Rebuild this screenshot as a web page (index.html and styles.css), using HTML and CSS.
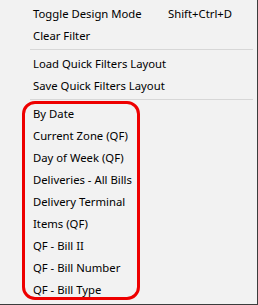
FILE: index.html
```html
<!DOCTYPE html>
<html lang="en">
<head>
    <meta charset="UTF-8">
    <meta name="viewport" content="width=device-width, initial-scale=1.0">
    <title>Quick Filters Menu</title>
    <link rel="stylesheet" href="styles.css">
</head>
<body>

    <div class="menu">
        <div class="item"><span class="label">Toggle Design Mode</span><span class="shortcut">Shift+Ctrl+D</span></div>
        <div class="item"><span class="label">Clear Filter</span></div>

        <div class="separator"></div>

        <div class="item"><span class="label">Load Quick Filters Layout</span></div>
        <div class="item"><span class="label">Save Quick Filters Layout</span></div>

        <div class="separator"></div>

        <!-- saved quick filters, highlighted -->
        <div class="group">
            <div class="item"><span class="label">By Date</span></div>
            <div class="item"><span class="label">Current Zone (QF)</span></div>
            <div class="item"><span class="label">Day of Week (QF)</span></div>
            <div class="item"><span class="label">Deliveries - All Bills</span></div>
            <div class="item"><span class="label">Delivery Terminal</span></div>
            <div class="item"><span class="label">Items (QF)</span></div>
            <div class="item"><span class="label">QF - Bill II</span></div>
            <div class="item"><span class="label">QF - Bill Number</span></div>
            <div class="item"><span class="label">QF - Bill Type</span></div>
        </div>
    </div>

</body>
</html>
```

FILE: styles.css
```css
/* Base styling */
body {
    margin: 0;
    padding: 0;
    background: #f2f2f2;
    font-family: 'Segoe UI', 'Noto Sans', sans-serif;
    font-size: 11.3px;
    color: #000;
}

/* Menu box */
.menu {
    width: 258px;
    height: 305px;
    box-sizing: border-box;
    padding-top: 3px;
    background: #f2f2f2;
    border-right: 1px solid #3c3c3c;
    border-bottom: 1px solid #3c3c3c;
}

.item {
    display: grid;
    grid-template-columns: 135px auto;
    height: 22px;
    line-height: 22px;
    padding-left: 33px;
    white-space: nowrap;
}

.separator {
    height: 1px;
    margin: 2px 4px 3px 30px;
    background: #d7d7d7;
}

/* Red highlight around the filter list */
.group {
    position: relative;
}

.group::after {
    content: '';
    position: absolute;
    left: 22px;
    top: -2px;
    width: 118px;
    height: 199px;
    box-sizing: border-box;
    border: 3px solid #ee0000;
    border-radius: 13px;
}
```
